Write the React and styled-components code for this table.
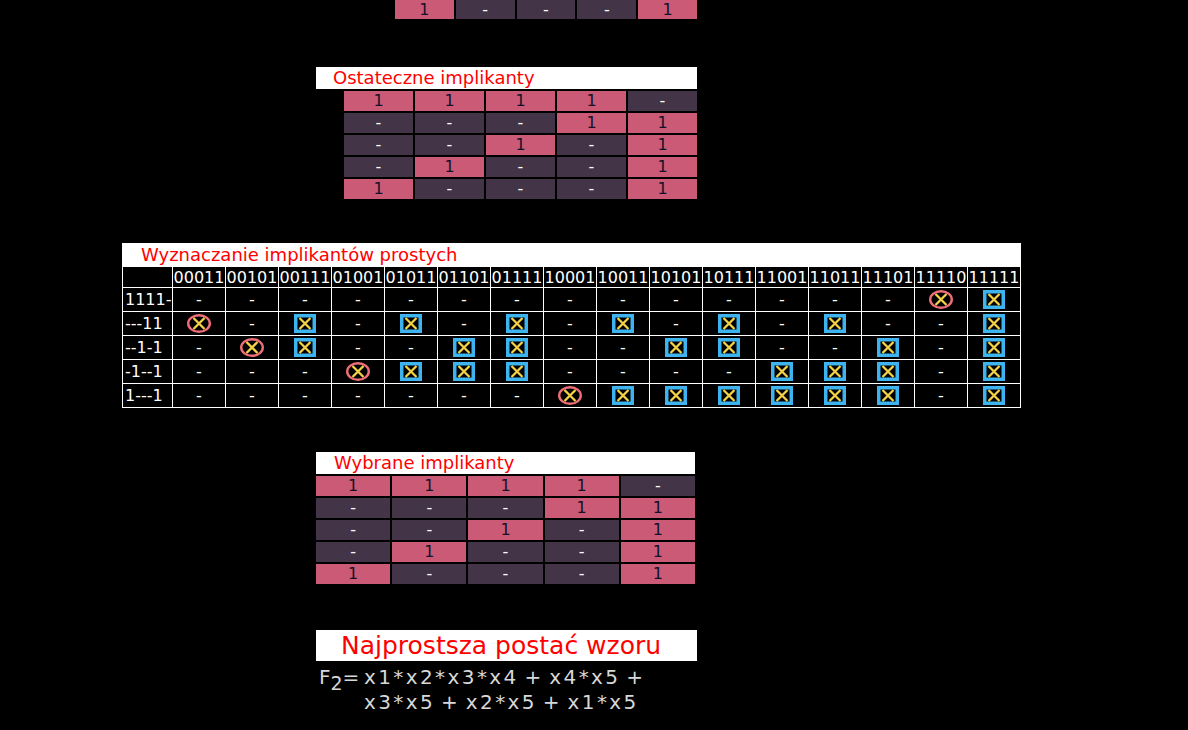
import React from 'react';
import styled, { createGlobalStyle } from 'styled-components';

const GlobalStyle = createGlobalStyle`
  html, body {
    margin: 0;
    padding: 0;
    background: #000;
  }
  body {
    font-family: "DejaVu Sans", Verdana, sans-serif;
  }
`;

const PINK = '#cb5a76';
const DARK = '#433547';

const implicants = ['1111-', '---11', '--1-1', '-1--1', '1---1'];
const minterms = [
  '00011', '00101', '00111', '01001', '01011', '01101', '01111', '10001',
  '10011', '10101', '10111', '11001', '11011', '11101', '11110', '11111',
];

const covers = (imp, m) => imp.split('').every((c, i) => c === '-' || c === m[i]);

const Page = styled.div`
  display: flex;
  flex-direction: column;
  align-items: flex-start;
  width: 1188px;
`;

const Section = styled.div`
  margin-left: ${props => props.$left}px;
  margin-top: ${props => props.$top || 0}px;
  width: ${props => props.$width}px;
  display: flex;
  flex-direction: column;
`;

const TitleBar = styled.div`
  background: #fff;
  color: #ff0000;
  height: ${props => props.$height || 22}px;
  line-height: ${props => props.$height || 22}px;
  font-size: ${props => props.$size || 18}px;
  padding-left: ${props => props.$pad}px;
  white-space: nowrap;
`;

const BitGrid = styled.div`
  display: grid;
  grid-template-columns: repeat(5, 1fr);
  gap: 2px;
  margin-top: ${props => props.$top || 0}px;
  margin-left: ${props => props.$indent || 0}px;
`;

const Bit = styled.div`
  height: ${props => props.$h || 20}px;
  line-height: ${props => props.$h || 20}px;
  background: ${props => (props.$one ? PINK : DARK)};
  color: ${props => (props.$one ? '#15112a' : '#fff')};
  font-size: 16px;
  text-align: center;
`;

const CoverTable = styled.div`
  display: grid;
  grid-template-columns: 49px repeat(16, 52px);
  grid-template-rows: 20px repeat(5, 23px);
  gap: 1px;
  padding: 1px;
  background: #fff;
`;

const Cell = styled.div`
  background: #000;
  color: #fff;
  font-size: 16px;
  display: flex;
  align-items: center;
  justify-content: ${props => (props.$label ? 'flex-start' : 'center')};
  padding-left: ${props => (props.$label ? 2 : 0)}px;
  white-space: nowrap;
  overflow: hidden;
`;

const Formula = styled.div`
  display: flex;
  align-items: flex-start;
  margin-top: 4px;
  color: #d8d8d8;
  font-size: 20px;
  line-height: 25px;
`;

const Lhs = styled.div`
  width: 45px;
  flex: none;
  padding-left: 3px;
  white-space: nowrap;
`;

const Sub = styled.span`
  position: relative;
  top: 6px;
  font-size: 19px;
`;

const Rhs = styled.div`
  display: flex;
  flex-direction: column;
  letter-spacing: 2.4px;
  word-spacing: -3px;
  white-space: nowrap;
`;

const Circled = () => (
  <svg width="24" height="19" viewBox="0 0 24 19">
    <ellipse cx="12" cy="9.5" rx="10.8" ry="8.3" fill="none" stroke="#f06e78" strokeWidth="2.4" />
    <path d="M6.5 4 L17.5 15 M17.5 4 L6.5 15" stroke="#f3d245" strokeWidth="2.3" />
  </svg>
);

const Boxed = () => (
  <svg width="22" height="19" viewBox="0 0 22 19">
    <rect x="1.75" y="1.75" width="18.5" height="15.5" fill="#000" stroke="#3db4ef" strokeWidth="3.5" />
    <path d="M5.5 4 L16.5 15 M16.5 4 L5.5 15" stroke="#f3d245" strokeWidth="2.3" />
  </svg>
);

const BitRow = ({ bits, h }) =>
  bits.split('').map((b, i) => (
    <Bit key={i} $one={b === '1'} $h={h}>{b === '1' ? '1' : '-'}</Bit>
  ));

const App = () => (
  <>
    <GlobalStyle />
    <Page>
      <Section $left={395} $width={302}>
        <BitGrid>
          <BitRow bits="1---1" h={19} />
        </BitGrid>
      </Section>

      <Section $left={316} $top={48} $width={381}>
        <TitleBar $pad={17}>Ostateczne implikanty</TitleBar>
        <BitGrid $top={2} $indent={28}>
          {implicants.map(imp => <BitRow key={imp} bits={imp} />)}
        </BitGrid>
      </Section>

      <Section $left={122} $top={44} $width={899}>
        <TitleBar $pad={19} $height={23}>Wyznaczanie implikantów prostych</TitleBar>
        <CoverTable>
          <Cell $label />
          {minterms.map(m => <Cell key={m}>{m}</Cell>)}
          {implicants.map(imp => {
            const row = [<Cell key={imp} $label>{imp}</Cell>];
            minterms.forEach(m => {
              let content = '-';
              if (covers(imp, m)) {
                const only = implicants.filter(o => covers(o, m)).length === 1;
                content = only ? <Circled /> : <Boxed />;
              }
              row.push(<Cell key={imp + m}>{content}</Cell>);
            });
            return row;
          })}
        </CoverTable>
      </Section>

      <Section $left={316} $top={44} $width={379}>
        <TitleBar $pad={18}>Wybrane implikanty</TitleBar>
        <BitGrid $top={2}>
          {implicants.map(imp => <BitRow key={imp} bits={imp} />)}
        </BitGrid>
      </Section>

      <Section $left={316} $top={46} $width={381}>
        <TitleBar $pad={25} $height={31} $size={25}>Najprostsza postać wzoru</TitleBar>
        <Formula>
          <Lhs>F<Sub>2</Sub>=</Lhs>
          <Rhs>
            <span>x1*x2*x3*x4 + x4*x5 +</span>
            <span>x3*x5 + x2*x5 + x1*x5</span>
          </Rhs>
        </Formula>
      </Section>
    </Page>
  </>
);

export default App;
